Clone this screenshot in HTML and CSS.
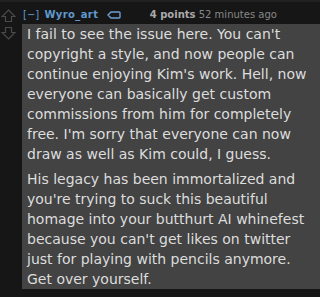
FILE: index.html
```html
<!DOCTYPE html>
<html lang="en">
<head>
    <meta charset="UTF-8">
    <title>Comment</title>
    <link rel="stylesheet" href="styles.css">
</head>
<body>
<div class="comment">
    <div class="votes">
        <svg class="arrow" width="15" height="13" viewBox="0 0 15 13">
            <path d="M7.5 1 L14 7.5 L10.5 7.5 L10.5 12.5 L4.5 12.5 L4.5 7.5 L1 7.5 Z" fill="none" stroke="#4a4a4a" stroke-width="1.2"/>
        </svg>
        <svg class="arrow" width="15" height="13" viewBox="0 0 15 13">
            <path d="M7.5 12 L14 5.5 L10.5 5.5 L10.5 0.5 L4.5 0.5 L4.5 5.5 L1 5.5 Z" fill="none" stroke="#4a4a4a" stroke-width="1.2"/>
        </svg>
    </div>
    <div class="entry">
        <div class="tagline">
            <span class="expand">[&minus;]</span>
            <span class="author">Wyro_art</span>
            <svg class="tag" width="14" height="8" viewBox="0 0 14 8">
                <path d="M4 1 H12 Q13 1 13 2 V6 Q13 7 12 7 H4 L1 4 Z" fill="none" stroke="#6d9ed3" stroke-width="1.4"/>
            </svg>
            <span class="score">4 points</span>
            <span class="time">52 minutes ago</span>
        </div>
        <div class="body">
            <p>I fail to see the issue here. You can't copyright a style, and now people can continue enjoying Kim's work. Hell, now everyone can basically get custom commissions from him for completely free. I'm sorry that everyone can now draw as well as Kim could, I guess.</p>
            <p>His legacy has been immortalized and you're trying to suck this beautiful homage into your butthurt AI whinefest because you can't get likes on twitter just for playing with pencils anymore. Get over yourself.</p>
        </div>
    </div>
</div>
</body>
</html>
```

FILE: styles.css
```css
body {
    margin: 0;
    background-color: #161616;
    font-family: Verdana, "DejaVu Sans", sans-serif;
    border-top: 2px solid #212121;
    overflow: hidden;
}
.comment {
    display: flex;
    padding-top: 6px;
}
.votes {
    flex: 0 0 22px;
    display: flex;
    flex-direction: column;
    gap: 5px;
    padding-top: 1px;
}
.arrow {
    display: block;
    margin-left: 1px;
}
.entry {
    flex: 1;
    min-width: 0;
}
.tagline {
    font-size: 10px;
    height: 16px;
    line-height: 13px;
    padding-left: 1px;
    color: #888;
    white-space: nowrap;
}
.expand {
    color: #5f99cf;
}
.author {
    color: #5f99cf;
    font-weight: bold;
    margin-left: 2px;
    letter-spacing: 0.4px;
}
.tag {
    margin-left: 5px;
    vertical-align: -1px;
}
.score {
    color: #aaa;
    font-weight: bold;
    margin-left: 26px;
}
.time {
    color: #888;
}
.body {
    background-color: #434343;
    color: #ddd;
    font-size: 14px;
    line-height: 20px;
    padding: 0 2px 0 5px;
}
.body p {
    margin: 0 0 5px;
}
.body p:last-child {
    margin-bottom: 0;
}
```
